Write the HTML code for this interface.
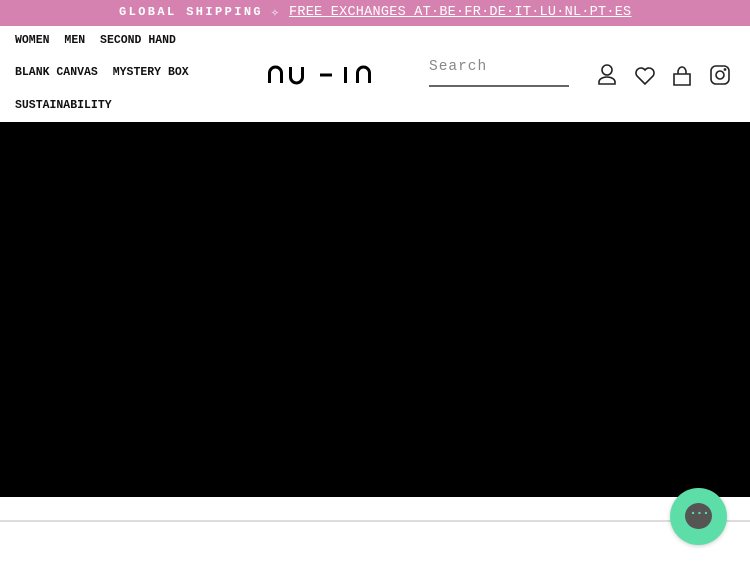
<!DOCTYPE html>
<html><head><style>
*{margin:0;padding:0;box-sizing:border-box}
body{width:750px;height:563px;background:#fff;font-family:"Liberation Mono",monospace;position:relative;overflow:hidden}
.bar{position:absolute;left:0;top:0;width:750px;height:26px;background:#d682b0;color:#fff;font-size:13px;line-height:25px}
.bar .g{position:absolute;left:119px;letter-spacing:2.4px;font-weight:bold;font-size:12px}
.bar .f{position:absolute;left:289px;text-decoration:underline;font-size:13.5px;letter-spacing:0.25px}
.bar .d{position:absolute;left:271px}
.nav{position:absolute;left:15px;font-size:11.5px;font-weight:bold;color:#111}
.nav span{margin-right:8px}
.search{position:absolute;left:429px;top:59px;width:140px;height:28px;border-bottom:2px solid #666;color:#888;font-size:14.5px;letter-spacing:1px}
.black{position:absolute;left:0;top:122px;width:750px;height:375px;background:#000}
.line{position:absolute;left:0;top:520px;width:750px;height:2px;background:#ddd}
.chat{position:absolute;left:670px;top:488px;width:57px;height:57px;border-radius:50%;background:#5ddea8;box-shadow:0 1px 4px rgba(0,0,0,.2)}
.bub{position:absolute;left:15px;top:15px;width:27px;height:26px;border-radius:50%;background:#555;color:#5ddea8;font-size:14px;text-align:center;line-height:22px;font-weight:bold;letter-spacing:-2px}
</style></head><body>
<div class="bar"><span class="g">GLOBAL SHIPPING</span><span class="d">✧</span><span class="f">FREE EXCHANGES AT·BE·FR·DE·IT·LU·NL·PT·ES</span></div>
<div class="nav" style="top:34px"><span>WOMEN</span> <span>MEN</span> <span>SECOND HAND</span></div>
<div class="nav" style="top:66px"><span>BLANK CANVAS</span> <span>MYSTERY BOX</span></div>
<div class="nav" style="top:99px"><span>SUSTAINABILITY</span></div>
<svg style="position:absolute;left:260px;top:60px" width="120" height="30" fill="none" stroke="#000" stroke-width="3">
<path d="M9.5 23V13a6 6 0 0 1 12 0v10"/>
<path d="M30.5 7v10a6 6 0 0 0 12 0V7"/>
<path d="M60 15h12"/>
<path d="M85.5 7v16"/>
<path d="M97.5 23V13a6 6 0 0 1 12 0v10"/>
</svg>
<div class="search">Search</div>
<svg style="position:absolute;left:596px;top:63px" width="140" height="24" fill="none" stroke="#222" stroke-width="1.6">
<circle cx="11" cy="7" r="5"/><path d="M3 21v-2a8 5 0 0 1 16 0v2z"/>
<path d="M49 21l-8-8a4.5 4.5 0 0 1 8-6a4.5 4.5 0 0 1 8 6z"/>
<path d="M78 11h16v11h-16z M82 11v-2a4 5 0 0 1 8 0v2"/>
<rect x="115" y="3" width="18" height="18" rx="5"/><circle cx="124" cy="12" r="4"/><circle cx="129" cy="6.5" r=".6" fill="#222"/>
</svg>
<div class="black"></div>
<div class="line"></div>
<div class="chat"><div class="bub">···</div></div>
</body></html>
